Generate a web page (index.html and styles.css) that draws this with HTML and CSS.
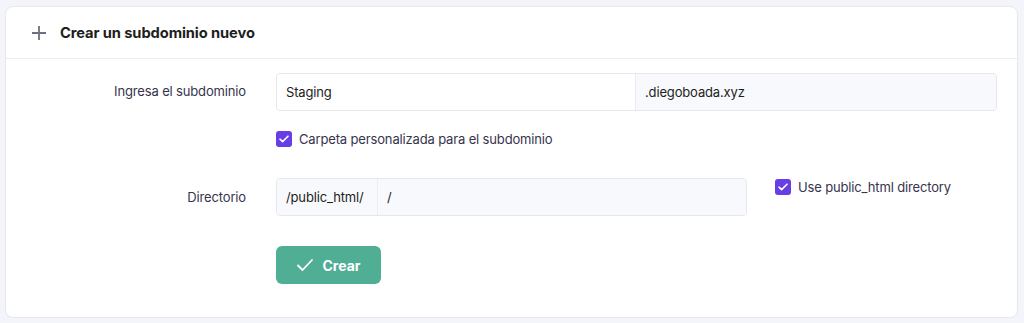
FILE: index.html
```html
<!DOCTYPE html>
<html lang="es">
<head>
    <meta charset="UTF-8">
    <title>Crear un subdominio nuevo</title>
    <link rel="stylesheet" href="styles.css">
</head>
<body>
    <div class="card">
        <div class="card-header">
            <svg class="plus-icon" width="16" height="16" viewBox="0 0 16 16">
                <path d="M8 1v14M1 8h14" stroke="#6d7081" stroke-width="1.8" fill="none"/>
            </svg>
            <h2>Crear un subdominio nuevo</h2>
        </div>
        <div class="card-body">
            <div class="form-row">
                <label class="row-label">Ingresa el subdominio</label>
                <div class="row-field">
                    <div class="input-group wide">
                        <div class="input-main">Staging</div>
                        <div class="input-addon suffix">.diegoboada.xyz</div>
                    </div>
                    <div class="check-line">
                        <span class="checkbox"><svg width="10" height="8" viewBox="0 0 10 8"><path d="M1 4.2l2.6 2.4L9 1.2" stroke="#fff" stroke-width="1.6" fill="none" stroke-linecap="round" stroke-linejoin="round"/></svg></span>
                        <span>Carpeta personalizada para el subdominio</span>
                    </div>
                </div>
            </div>
            <div class="form-row dir-row">
                <label class="row-label">Directorio</label>
                <div class="row-field inline">
                    <div class="input-group narrow">
                        <div class="input-addon prefix">/public_html/</div>
                        <div class="input-main grey">/</div>
                    </div>
                    <div class="check-line side">
                        <span class="checkbox"><svg width="10" height="8" viewBox="0 0 10 8"><path d="M1 4.2l2.6 2.4L9 1.2" stroke="#fff" stroke-width="1.6" fill="none" stroke-linecap="round" stroke-linejoin="round"/></svg></span>
                        <span>Use public_html directory</span>
                    </div>
                </div>
            </div>
            <div class="form-row">
                <div class="row-label"></div>
                <div class="row-field">
                    <button class="btn-create">
                        <svg width="18" height="14" viewBox="0 0 18 14"><path d="M2 7.5l4.5 4.5L16 2" stroke="#fff" stroke-width="1.8" fill="none" stroke-linecap="round" stroke-linejoin="round"/></svg>
                        Crear
                    </button>
                </div>
            </div>
        </div>
    </div>
</body>
</html>
```

FILE: styles.css
```css
/* Basic Reset */
* {
    margin: 0;
    padding: 0;
    box-sizing: border-box;
}

body {
    font-family: 'Inter', 'Noto Sans', sans-serif;
    background: #f4f4fb;
    color: #36344d;
    padding: 6px 6px 0 5px;
}

/* Card */
.card {
    background: #ffffff;
    border: 1px solid #e6e6ef;
    border-radius: 8px;
    height: 312px;
}

.card-header {
    display: flex;
    align-items: center;
    height: 52px;
    padding: 0 0 0 25px;
    border-bottom: 1px solid #ececf2;
}

.plus-icon {
    margin-right: 13px;
}

.card-header h2 {
    font-size: 14.7px;
    font-weight: 700;
    color: #1d1e20;
    letter-spacing: -0.1px;
}

/* Form */
.card-body {
    padding: 14px 20px 0 0;
}

.form-row {
    display: flex;
}

.row-label {
    width: 240px;
    flex-shrink: 0;
    text-align: right;
    font-size: 13px;
    letter-spacing: -0.15px;
    color: #36344d;
    padding-top: 10px;
}

.row-field {
    margin-left: 30px;
    flex: 1;
}

.row-field.inline {
    display: flex;
    align-items: flex-start;
}

.input-group {
    display: flex;
    height: 38px;
    border: 1px solid #e6e6ef;
    border-radius: 4px;
    font-size: 13px;
    letter-spacing: -0.15px;
    color: #1d1e20;
}

.input-group.narrow {
    width: 471px;
}

.input-main {
    flex: 1;
    display: flex;
    align-items: center;
    padding: 0 9px;
    background: #fff;
    border-radius: 4px 0 0 4px;
}

.input-main.grey {
    background: #f8f9fd;
    border-radius: 0 4px 4px 0;
}

.input-addon {
    display: flex;
    align-items: center;
    padding: 0 9px;
    background: #f8f9fd;
}

.input-addon.suffix {
    width: 361px;
    padding-left: 9px;
    border-left: 1px solid #ececf2;
    border-radius: 0 4px 4px 0;
}

.input-addon.prefix {
    width: 101px;
    border-right: 1px solid #ececf2;
    border-radius: 4px 0 0 4px;
}

.check-line {
    display: flex;
    align-items: center;
    gap: 7px;
    margin-top: 20px;
    font-size: 13px;
    letter-spacing: -0.15px;
    color: #36344d;
}

.check-line.side {
    margin: 1px 0 0 28px;
}

.checkbox {
    width: 16px;
    height: 16px;
    border-radius: 3px;
    background: #673de6;
    display: flex;
    align-items: center;
    justify-content: center;
}

.dir-row {
    margin-top: 31px;
}

.dir-row .row-label {
    padding-top: 11px;
}

/* Button */
.btn-create {
    margin-top: 30px;
    height: 38px;
    width: 105px;
    border: none;
    border-radius: 6px;
    background: #4fae94;
    color: #fff;
    font-family: inherit;
    font-size: 14px;
    font-weight: 700;
    display: flex;
    align-items: center;
    justify-content: center;
    gap: 8px;
}
```
